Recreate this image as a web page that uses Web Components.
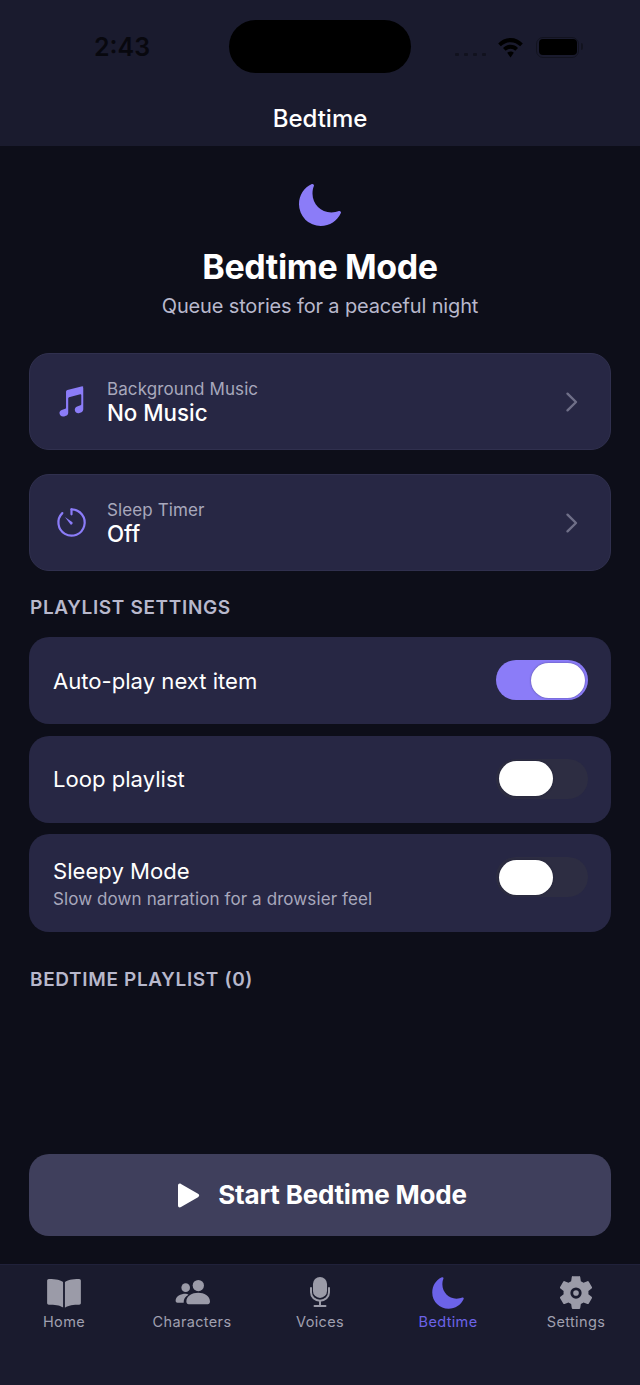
<!DOCTYPE html>
<html><head><meta charset="utf-8"><title>Bedtime</title>
<style>
html,body{margin:0;padding:0;background:#0d0e19;}
body{font-family:Inter,"Liberation Sans",sans-serif;color:#fff;width:640px;height:1385px;overflow:hidden;}
app-root{display:flex;flex-direction:column;height:1385px;}
</style></head><body>
<app-root></app-root>
<script>
const ICONS={
moon:'<path d="M264 480A232 232 0 0 1 32 248c0-94 54-178.280 137.610-214.670a16 16 0 0 1 21.060 21.060C181.070 76.430 176 104.660 176 136c0 110.280 89.720 200 200 200 31.340 0 59.570-5.070 81.610-14.670a16 16 0 0 1 21.060 21.060C442.280 426 358 480 264 480z"/>',
music:'<path d="M432 36c-5-4-11-5.500-18-4L196 86c-12 3-20 14-20 26v236c0 7-4 13-11 15l-52 17c-20 7-33 24-33 44 0 33 33 62 69 50l26-9c19-7 33-25 33-46V208c0-7 5-13 12-15l164-44c8-2 15 3 15 11v136c0 7-4 12-11 15l-50 17c-20 7-34 25-34 48 0 35 34 60 68 49l22-8c21-7 34-25 34-46V62c0-10-3-20-10-26z"/>',
book:'<path d="M238 96c-30-24-88-40-198-40-13 0-24 11-24 24v318c0 13 11 24 24 24 80 0 155 6 198 38 2 2 5 1 5-2V108c0-4-2-9-5-12zM472 56c-110 0-168 16-198 40-3 3-5 8-5 12v352c0 3 3 4 5 2 43-32 118-40 198-40 13 0 24-11 24-24V80c0-13-11-24-24-24z"/>',
people:'<circle cx="354" cy="148" r="84"/><circle cx="166" cy="178" r="64"/><path d="M352 256c-88 0-176 46-176 130 0 24 14 38 34 38h284c20 0 34-14 34-38 0-84-88-130-176-130zM168 268c-76 0-152 36-152 104 0 18 12 30 28 30h92c-4-50 24-92 72-118-12-10-28-16-40-16z"/>',
mic:'<rect x="156" y="28" width="200" height="298" rx="100"/><path d="M128 185v60c0 70 56 121 128 121s128-51 128-121v-60" fill="none" stroke="currentColor" stroke-width="28" stroke-linecap="round"/><path d="M256 366v75M178 441h156" fill="none" stroke="currentColor" stroke-width="28" stroke-linecap="round"/>',
gear:'<path fill-rule="evenodd" d="M300 16h-88a16 16 0 0 0-16 14l-9 58a170 170 0 0 0-38 22l-55-22a16 16 0 0 0-20 7l-44 76a16 16 0 0 0 4 21l46 36a170 170 0 0 0 0 44l-46 36a16 16 0 0 0-4 21l44 76a16 16 0 0 0 20 7l55-22a170 170 0 0 0 38 22l9 58a16 16 0 0 0 16 14h88a16 16 0 0 0 16-14l9-58a170 170 0 0 0 38-22l55 22a16 16 0 0 0 20-7l44-76a16 16 0 0 0-4-21l-46-36a170 170 0 0 0 0-44l46-36a16 16 0 0 0 4-21l-44-76a16 16 0 0 0-20-7l-55 22a170 170 0 0 0-38-22l-9-58a16 16 0 0 0-16-14zM256 176a80 80 0 1 1 0 160 80 80 0 0 1 0-160zM256 216a40 40 0 1 0 0 80 40 40 0 0 0 0-80z"/>',
timer:'<path d="M256 64a192 192 0 1 1-134 55" fill="none" stroke="currentColor" stroke-width="32" stroke-linecap="round"/><path d="M256 64v72" fill="none" stroke="currentColor" stroke-width="32" stroke-linecap="round"/><path d="M160 176l110 76a24 24 0 0 1-28 34z"/>',
chevron:'<path d="M9.500 5.700L18 14l-8.500 8.300" fill="none" stroke="currentColor" stroke-width="2.400" stroke-linecap="round" stroke-linejoin="round"/>',
play:'<path d="M2 2.500C2 .8 3.500 0 5 .9L22 10.800c1.600 1 1.600 2.400 0 3.400L5 24.100C3.500 25 2 24.200 2 22.500z"/>'
};
function def(name,css,html){
  customElements.define(name,class extends HTMLElement{
    constructor(){super();this.attachShadow({mode:'open'});}
    connectedCallback(){
      const g=a=>this.getAttribute(a)||'';
      this.shadowRoot.innerHTML='<style>'+css+'</style>'+(typeof html==='function'?html(g):html);
    }
  });
}
def('ui-icon',':host{display:inline-flex;line-height:0}svg{width:100%;height:100%;fill:currentColor;display:block}',
 g=>`<svg viewBox="${g('box')||'0 0 512 512'}" aria-hidden="true">${ICONS[g('name')]}</svg>`);

def('status-bar',`:host{display:flex;align-items:center;height:53px;margin-top:20px;position:relative}
.time{position:absolute;left:94px;top:12px;font:600 25px/30px Inter,sans-serif;color:#08080e}
.island{width:182px;height:53px;border-radius:27px;background:#000;margin:0 auto}
.right{position:absolute;left:455px;top:16px;display:flex;align-items:center;height:22px}
.dots{display:flex;gap:5px;margin-top:14px;margin-right:11px}
.dots i{width:4px;height:3px;background:#050508;opacity:.4;border-radius:1px}
svg{display:block}
.batt{margin-left:12px;width:43px;height:21px;border:1.500px solid #12131f;border-radius:7px;box-sizing:border-box;padding:1.500px;display:flex;position:relative}
.batt b{flex:1;background:#000;border-radius:4px}
.batt:after{content:"";position:absolute;right:-5px;top:5.500px;width:2.500px;height:7px;background:#12131f;border-radius:0 2px 2px 0}
`,`<span class="time">2:43</span><div class="island"></div>
<div class="right"><div class="dots"><i></i><i></i><i></i><i></i></div>
<svg width="27" height="21" viewBox="0 0 26 21"><path d="M13 1C8 1 4 3 .7 6.500l2.600 2.800C6 6.800 9.300 5.200 13 5.200s7 1.600 9.700 4.100l2.600-2.800C22 3 18 1 13 1z" fill="#000"/><path d="M13 7.800c-3 0-5.500 1.200-7.500 3.200l2.700 2.800c1.300-1.300 3-2.100 4.800-2.100s3.500.8 4.800 2.100l2.700-2.800c-2-2-4.500-3.200-7.500-3.200z" fill="#000"/><path d="M13 14.500c-1.300 0-2.500.5-3.300 1.300L13 20.500l3.300-4.700C15.500 15 14.300 14.500 13 14.500z" fill="#000"/></svg>
<div class="batt"><b></b></div></div>`);

def('app-header',`:host{display:block;background:#1a1b2e;height:146px;box-sizing:border-box}
h1{margin:0;padding-top:30px;text-align:center;font:500 24px/32px Inter,sans-serif;color:#fff}`,
`<status-bar></status-bar><h1>Bedtime</h1>`);

def('hero-block',`:host{display:block;text-align:center;padding-top:35px}
ui-icon{width:48px;height:48px;color:#8b7cf8;display:block;margin:0 auto}
h2{margin:16px 0 0;font:700 34px/44px Inter,sans-serif;color:#fff;letter-spacing:-.38px}
p{margin:4px 0 0;font:400 20px/26px Inter,sans-serif;color:#b8b8cc;letter-spacing:-.15px}`,
`<ui-icon name="moon"></ui-icon><h2>Bedtime Mode</h2><p>Queue stories for a peaceful night</p>`);

def('option-card',`:host{display:flex;align-items:center;height:97px;box-sizing:border-box;background:#272744;border:1px solid #30304e;border-radius:20px;padding:0 24px 0 24px}
ui-icon{width:35px;height:35px;color:#8b7cf8;flex:none}
.t{flex:1;margin-left:18px;display:flex;flex-direction:column;margin-top:0}
.l{font:400 17px/22px Inter,sans-serif;color:#a8a8bc;letter-spacing:.1px}
.v{font:500 22.300px/26px Inter,sans-serif;color:#fff;margin-top:0}
.c{width:28px;height:28px;color:#6f6f88;flex:none}`,
g=>`<ui-icon name="${g('icon')}"></ui-icon><div class="t"><span class="l">${g('label')}</span><span class="v">${g('value')}</span></div><ui-icon class="c" name="chevron" box="0 0 28 28"></ui-icon>`);

def('section-title',`:host{display:block;font:600 19px/26px Inter,sans-serif;color:#b8b8cc;letter-spacing:.65px;padding-left:1px}`,'<slot></slot>');

def('toggle-switch',`:host{display:block;width:92px;height:40px;border-radius:20px;box-sizing:border-box;position:relative;background:#2d2d42;flex:none}
:host([on]){background:#8b7cf8}
i{position:absolute;top:2.500px;left:3px;width:54px;height:35px;border-radius:18px;background:#fff;box-shadow:0 0 2px rgba(20,20,40,.5)}
:host([on]) i{left:35px}`,'<i></i>');

def('setting-row',`:host{display:flex;align-items:center;justify-content:space-between;background:#272744;border-radius:20px;padding:0 23px 0 24px;box-sizing:border-box}
.t{display:flex;flex-direction:column}
.t.two{margin-top:2px}
.l{font:400 22.100px/28px Inter,sans-serif;color:#fff}
.s{font:400 17px/24px Inter,sans-serif;color:#a8a8bc;letter-spacing:.1px;margin-top:2px}
toggle-switch{align-self:flex-start;margin-top:23px}`,
g=>`<div class="t ${g('sub')?'two':''}"><span class="l">${g('label')}</span>${g('sub')?`<span class="s">${g('sub')}</span>`:''}</div><toggle-switch ${g('on')?'on':''}></toggle-switch>`);

def('start-button',`:host{display:flex;align-items:center;justify-content:center;height:82px;background:#3f3f5c;border-radius:20px;box-sizing:border-box;gap:18px;color:#fff;padding-left:3px}
ui-icon{width:24px;height:25px;color:#fff}
span{font:700 26px/30px Inter,sans-serif;letter-spacing:-.2px}`,
`<ui-icon name="play" box="0 0 24 25"></ui-icon><span>Start Bedtime Mode</span>`);

def('tab-item',`:host{display:flex;flex-direction:column;align-items:center;width:128px;color:#9b9ba8}
:host([active]){color:#6c63e8}
ui-icon{width:36px;height:36px;display:block}
span{font:400 14.500px/18px Inter,sans-serif;letter-spacing:.35px;margin-top:2px;color:#a0a0b0}
:host([active]) span{color:#6c63e8}`,
g=>`<ui-icon name="${g('icon')}" ${g('box')?`box="${g('box')}"`:''}></ui-icon><span>${g('label')}</span>`);

def('tab-bar',`:host{display:flex;height:121px;box-sizing:border-box;background:#1a1b2e;padding-top:10px;border-top:1px solid #20213a}`,
`<tab-item icon="book" label="Home"></tab-item><tab-item icon="people" box="-8 -10 536 536" label="Characters"></tab-item><tab-item icon="mic" label="Voices"></tab-item><tab-item icon="moon" label="Bedtime" active></tab-item><tab-item icon="gear" label="Settings"></tab-item>`);

def('app-root',`:host{display:flex;flex-direction:column;height:1385px}
main{flex:1;padding:0 29px;display:flex;flex-direction:column}
.c1{margin-top:24px}
.s1{margin-top:24px}.r{margin-top:16px;display:flex;flex-direction:column;gap:11.500px}
.s2{margin-top:35px}
start-button{margin-top:auto;margin-bottom:28px}
`,`<app-header></app-header><main><hero-block></hero-block>
<option-card style="margin-top:34px" icon="music" label="Background Music" value="No Music"></option-card>
<option-card class="c1" icon="timer" label="Sleep Timer" value="Off"></option-card>
<section-title class="s1">PLAYLIST SETTINGS</section-title>
<div class="r"><setting-row style="height:87px" label="Auto-play next item" on="1"></setting-row><setting-row style="height:87px" label="Loop playlist"></setting-row><setting-row style="height:98px" label="Sleepy Mode" sub="Slow down narration for a drowsier feel"></setting-row></div>
<section-title class="s2">BEDTIME PLAYLIST (0)</section-title>
<start-button></start-button></main><tab-bar></tab-bar>`);
</script></body></html>
